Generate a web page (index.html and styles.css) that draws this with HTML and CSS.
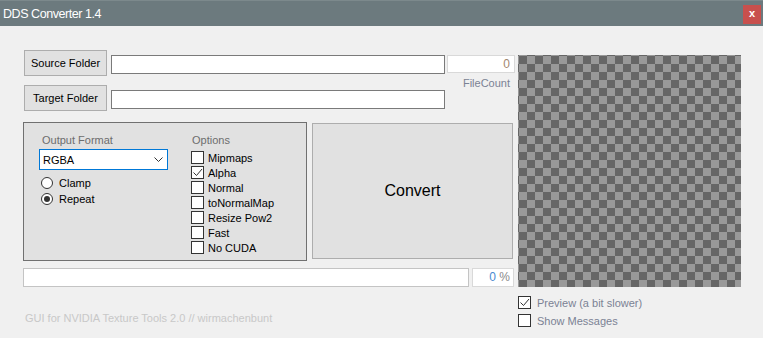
FILE: index.html
```html
<!DOCTYPE html>
<html lang="en">
<head>
  <meta charset="UTF-8" />
  <meta name="viewport" content="width=device-width, initial-scale=1.0" />
  <title>DDS Converter 1.4</title>
  <link rel="stylesheet" href="styles.css">
</head>
<body>
  <div class="titlebar">
    <span class="title">DDS Converter 1.4</span>
    <div class="close">x</div>
  </div>

  <div class="content">
    <div class="left">
      <div class="row row-source">
        <button class="btn folder-btn">Source Folder</button>
        <div class="textbox path"></div>
        <div class="count-col">
          <div class="textbox count">0</div>
          <div class="count-label">FileCount</div>
        </div>
      </div>

      <div class="row row-target">
        <button class="btn folder-btn">Target Folder</button>
        <div class="textbox path"></div>
      </div>

      <div class="settings">
        <div class="group">
          <div class="col col-format">
            <div class="group-label">Output Format</div>
            <div class="select">
              <span>RGBA</span>
              <svg width="9" height="5" viewBox="0 0 9 5"><polyline points="0.5,0.5 4.5,4.5 8.5,0.5" fill="none" stroke="#333" stroke-width="1"/></svg>
            </div>
            <div class="radio-row"><span class="radio"></span>Clamp</div>
            <div class="radio-row"><span class="radio on"></span>Repeat</div>
          </div>
          <div class="col col-options">
            <div class="group-label">Options</div>
            <div class="check-list">
              <div class="check-row"><span class="box"></span>Mipmaps</div>
              <div class="check-row"><span class="box on"><svg width="11" height="11" viewBox="0 0 11 11"><polyline points="1.5,5.5 4.5,8.5 10,2" fill="none" stroke="#333" stroke-width="1"/></svg></span>Alpha</div>
              <div class="check-row"><span class="box"></span>Normal</div>
              <div class="check-row"><span class="box"></span>toNormalMap</div>
              <div class="check-row"><span class="box"></span>Resize Pow2</div>
              <div class="check-row"><span class="box"></span>Fast</div>
              <div class="check-row"><span class="box"></span>No CUDA</div>
            </div>
          </div>
        </div>
        <button class="convert">Convert</button>
      </div>

      <div class="progress-row">
        <div class="textbox progress"></div>
        <div class="textbox percent"><span class="num">0</span> %</div>
      </div>

      <div class="footer">GUI for NVIDIA Texture Tools 2.0 // wirmachenbunt</div>
    </div>

    <div class="right">
      <div class="preview"></div>
      <div class="opt-row first"><span class="box on"><svg width="11" height="11" viewBox="0 0 11 11"><polyline points="1.5,5.5 4.5,8.5 10,2" fill="none" stroke="#333" stroke-width="1"/></svg></span>Preview (a bit slower)</div>
      <div class="opt-row"><span class="box"></span>Show Messages</div>
    </div>
  </div>
</body>
</html>
```

FILE: styles.css
```css
:root {
  --bg: #f0f0f0;
  --title-bg: #6c7a7e;
  --close: #c8504d;
  --text: #000;
  --muted: #6d6d6d;
  --soft: #7b8294;
}

body {
  margin: 0;
  background: var(--bg);
  font-family: "Liberation Sans", Arial, sans-serif;
  font-size: 11px;
  color: var(--text);
  overflow: hidden;
}

.titlebar {
  height: 26px;
  background: var(--title-bg);
  border-top: 1px solid #7c898c;
  box-sizing: border-box;
  display: flex;
  align-items: center;
  justify-content: space-between;
  padding-left: 3px;
}

.title {
  color: #fff;
  font-size: 12.5px;
  letter-spacing: -0.45px;
  margin-top: 1px;
}

.close {
  width: 18px;
  height: 19px;
  margin-right: 2px;
  margin-top: 2px;
  background: var(--close);
  color: #fff;
  font-weight: bold;
  font-size: 11px;
  line-height: 17px;
  text-align: center;
}

.content {
  display: flex;
  gap: 3px;
  padding: 24px 0 0 23px;
}

.left {
  width: 492px;
}

.row {
  display: flex;
  align-items: flex-start;
  height: 26px;
}

.row-target {
  margin-top: 9px;
}

.btn {
  font-family: inherit;
  font-size: 11px;
  color: #000;
  background: #e1e1e1;
  border: 1px solid #adadad;
  padding: 0;
}

.folder-btn {
  width: 83px;
  height: 26px;
  margin-left: 1px;
}

.textbox {
  background: #fff;
  box-sizing: border-box;
}

.path {
  width: 334px;
  height: 19px;
  margin: 5px 0 0 4px;
  border: 1px solid #7a7a7a;
}

.count-col {
  margin: 5px 0 0 2px;
  width: 68px;
}

.count {
  height: 18px;
  border: 1px solid #d9d9d9;
  text-align: right;
  padding-right: 4px;
  font-size: 12px;
  line-height: 16px;
  color: #a2866f;
}

.count-label {
  text-align: right;
  padding-right: 5px;
  margin-top: 4px;
  color: var(--soft);
}

.settings {
  display: flex;
  align-items: flex-start;
  gap: 5px;
  margin-top: 11px;
}

.group {
  width: 284px;
  height: 139px;
  box-sizing: border-box;
  border: 1px solid #707070;
  background: #e1e1e1;
  display: grid;
  grid-template-columns: 152px 1fr;
  padding: 11px 0 0 15px;
}

.group-label {
  color: var(--muted);
  font-size: 11px;
  line-height: 13px;
  padding-left: 3px;
}

.col-options .group-label {
  padding-left: 1px;
}

.select {
  width: 129px;
  height: 21px;
  margin-top: 2px;
  box-sizing: border-box;
  border: 1px solid #0078d7;
  background: #fff;
  display: flex;
  align-items: center;
  justify-content: space-between;
  padding: 0 4px 0 3px;
  font-size: 11px;
}

.radio-row {
  display: flex;
  align-items: center;
  gap: 6px;
  height: 13px;
  margin-left: 2px;
}

.select + .radio-row {
  margin-top: 6px;
}

.radio-row + .radio-row {
  margin-top: 3px;
}

.radio {
  width: 12px;
  height: 12px;
  box-sizing: border-box;
  border: 1px solid #333;
  border-radius: 50%;
  background: #fff;
  display: flex;
  align-items: center;
  justify-content: center;
}

.radio.on::after {
  content: "";
  width: 6px;
  height: 6px;
  border-radius: 50%;
  background: #333;
}

.check-list {
  margin-top: 4px;
  display: flex;
  flex-direction: column;
  gap: 2px;
}

.check-row, .opt-row {
  display: flex;
  align-items: center;
  gap: 4px;
  height: 13px;
}

.box {
  width: 13px;
  height: 13px;
  box-sizing: border-box;
  border: 1px solid #333;
  background: #fff;
  display: flex;
  align-items: center;
  justify-content: center;
}

.convert {
  width: 201px;
  height: 136px;
  margin-top: 1px;
  font-family: inherit;
  font-size: 16px;
  color: #000;
  background: #e1e1e1;
  border: 1px solid #adadad;
  padding: 0;
}

.progress-row {
  display: flex;
  gap: 3px;
  margin-top: 7px;
}

.progress {
  width: 446px;
  height: 19px;
  border: 1px solid #c4c4c4;
}

.percent {
  width: 42px;
  height: 19px;
  border: 1px solid #d9d9d9;
  text-align: right;
  padding-right: 3px;
  font-size: 12px;
  line-height: 17px;
  color: #8a8a8a;
}

.percent .num {
  color: #4a8ad0;
}

.footer {
  margin-top: 25px;
  padding-left: 2px;
  font-size: 11px;
  color: #c8c8c8;
}

.right {
  padding-top: 5px;
}

.preview {
  width: 223px;
  height: 232px;
  background-color: #666;
  background-image: repeating-conic-gradient(#999 0 25%, #666 0 50%);
  background-size: 16px 16px;
  background-position: 1px 1px;
}

.opt-row {
  color: var(--soft);
  font-size: 11px;
  gap: 6px;
}

.opt-row.first {
  margin-top: 9px;
}

.opt-row + .opt-row {
  margin-top: 5px;
}
```
